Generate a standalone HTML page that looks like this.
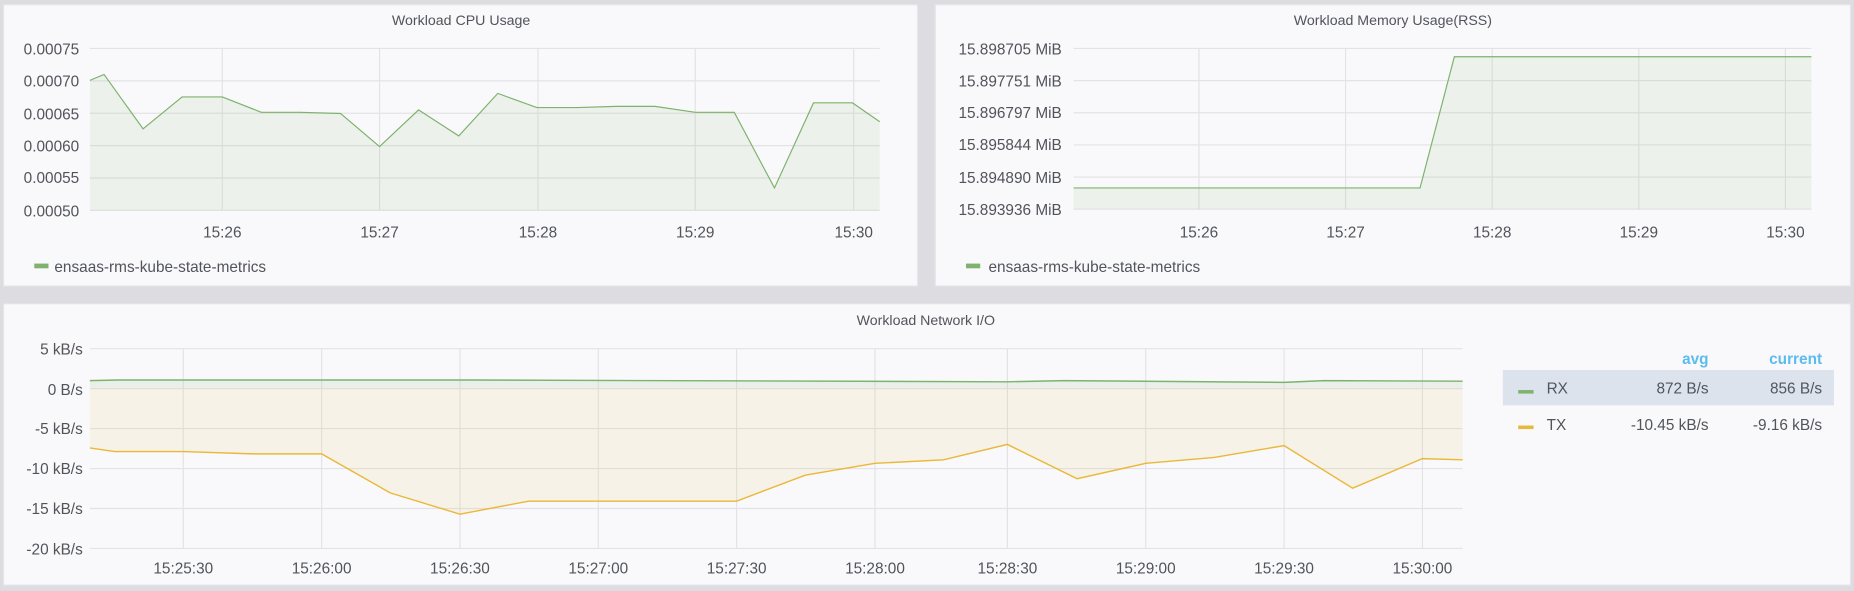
<!DOCTYPE html>
<html><head><meta charset="utf-8"><style>
html,body{margin:0;padding:0;background:#dcdce1;width:1854px;height:591px;overflow:hidden}
svg{display:block}
text{font-family:"Liberation Sans","DejaVu Sans",sans-serif;fill:#52545c}
</style></head><body>
<svg width="1854" height="591" viewBox="0 0 1568 500" preserveAspectRatio="none">
<rect x="0" y="0" width="1568" height="500" fill="#dcdce1"/>
<!-- panels -->
<rect x="3" y="4" width="773" height="238" fill="#f9f9fb" stroke="#e6e6ea"/>
<rect x="791" y="4" width="774" height="238" fill="#f9f9fb" stroke="#e6e6ea"/>
<rect x="3" y="257" width="1562" height="238" fill="#f9f9fb" stroke="#e6e6ea"/>

<!-- CPU -->
<text x="390" y="21" font-size="12" text-anchor="middle">Workload CPU Usage</text>
<g stroke="#e3e3e6" stroke-width="1">
<line x1="76" y1="41" x2="744" y2="41"/><line x1="76" y1="68.4" x2="744" y2="68.4"/><line x1="76" y1="95.8" x2="744" y2="95.8"/><line x1="76" y1="123.2" x2="744" y2="123.2"/><line x1="76" y1="150.6" x2="744" y2="150.6"/><line x1="76" y1="178" x2="744" y2="178"/>
<line x1="188" y1="41" x2="188" y2="178"/><line x1="321" y1="41" x2="321" y2="178"/><line x1="455" y1="41" x2="455" y2="178"/><line x1="588" y1="41" x2="588" y2="178"/><line x1="722" y1="41" x2="722" y2="178"/>
</g>
<g font-size="13" text-anchor="end">
<text x="67" y="46">0.00075</text><text x="67" y="73">0.00070</text><text x="67" y="101">0.00065</text><text x="67" y="128">0.00060</text><text x="67" y="155">0.00055</text><text x="67" y="183">0.00050</text>
</g>
<g font-size="13" text-anchor="middle">
<text x="188" y="201">15:26</text><text x="321" y="201">15:27</text><text x="455" y="201">15:28</text><text x="588" y="201">15:29</text><text x="722" y="201">15:30</text>
</g>
<path d="M76,68 L88,63 L121,109 L154,82 L188,82 L221,95 L254,95 L288,96 L321,124 L354,93 L388,115 L421,79 L454,91 L488,91 L521,90 L554,90 L588,95 L621,95 L655,159 L688,87 L721,87 L744,103 L744,178 L76,178Z" fill="#7eb26d" fill-opacity="0.1"/>
<path d="M76,68 L88,63 L121,109 L154,82 L188,82 L221,95 L254,95 L288,96 L321,124 L354,93 L388,115 L421,79 L454,91 L488,91 L521,90 L554,90 L588,95 L621,95 L655,159 L688,87 L721,87 L744,103" fill="none" stroke="#7eb26d" stroke-width="1"/>
<rect x="29" y="223" width="12" height="4" fill="#7eb26d"/>
<text x="46" y="230" font-size="13">ensaas-rms-kube-state-metrics</text>

<!-- Memory -->
<text x="1178" y="21" font-size="12" text-anchor="middle">Workload Memory Usage(RSS)</text>
<g stroke="#e3e3e6" stroke-width="1">
<line x1="908" y1="41" x2="1532" y2="41"/><line x1="908" y1="68.2" x2="1532" y2="68.2"/><line x1="908" y1="95.4" x2="1532" y2="95.4"/><line x1="908" y1="122.6" x2="1532" y2="122.6"/><line x1="908" y1="149.8" x2="1532" y2="149.8"/><line x1="908" y1="177" x2="1532" y2="177"/>
<line x1="1014" y1="41" x2="1014" y2="177"/><line x1="1138" y1="41" x2="1138" y2="177"/><line x1="1262" y1="41" x2="1262" y2="177"/><line x1="1386" y1="41" x2="1386" y2="177"/><line x1="1510" y1="41" x2="1510" y2="177"/>
</g>
<g font-size="13" text-anchor="end">
<text x="898" y="46">15.898705 MiB</text><text x="898" y="73">15.897751 MiB</text><text x="898" y="100">15.896797 MiB</text><text x="898" y="127">15.895844 MiB</text><text x="898" y="155">15.894890 MiB</text><text x="898" y="182">15.893936 MiB</text>
</g>
<g font-size="13" text-anchor="middle">
<text x="1014" y="201">15:26</text><text x="1138" y="201">15:27</text><text x="1262" y="201">15:28</text><text x="1386" y="201">15:29</text><text x="1510" y="201">15:30</text>
</g>
<path d="M908,159 L1201,159 L1230,48 L1532,48 L1532,177 L908,177Z" fill="#7eb26d" fill-opacity="0.1"/>
<path d="M908,159 L1201,159 L1230,48 L1532,48" fill="none" stroke="#7eb26d" stroke-width="1"/>
<rect x="817" y="223" width="12" height="4" fill="#7eb26d"/>
<text x="836" y="230" font-size="13">ensaas-rms-kube-state-metrics</text>

<!-- Network -->
<text x="783" y="275" font-size="12" text-anchor="middle">Workload Network I/O</text>
<g stroke="#e3e3e6" stroke-width="1">
<line x1="76" y1="295" x2="1237" y2="295"/><line x1="76" y1="328.8" x2="1237" y2="328.8"/><line x1="76" y1="362.6" x2="1237" y2="362.6"/><line x1="76" y1="396.4" x2="1237" y2="396.4"/><line x1="76" y1="430.2" x2="1237" y2="430.2"/><line x1="76" y1="464" x2="1237" y2="464"/>
<line x1="155" y1="295" x2="155" y2="464"/><line x1="272" y1="295" x2="272" y2="464"/><line x1="389" y1="295" x2="389" y2="464"/><line x1="506" y1="295" x2="506" y2="464"/><line x1="623" y1="295" x2="623" y2="464"/><line x1="740" y1="295" x2="740" y2="464"/><line x1="852" y1="295" x2="852" y2="464"/><line x1="969" y1="295" x2="969" y2="464"/><line x1="1086" y1="295" x2="1086" y2="464"/><line x1="1203" y1="295" x2="1203" y2="464"/>
</g>
<g font-size="13" text-anchor="end">
<text x="70" y="300">5 kB/s</text><text x="70" y="334">0 B/s</text><text x="70" y="367">-5 kB/s</text><text x="70" y="401">-10 kB/s</text><text x="70" y="435">-15 kB/s</text><text x="70" y="469">-20 kB/s</text>
</g>
<g font-size="13" text-anchor="middle">
<text x="155" y="485">15:25:30</text><text x="272" y="485">15:26:00</text><text x="389" y="485">15:26:30</text><text x="506" y="485">15:27:00</text><text x="623" y="485">15:27:30</text><text x="740" y="485">15:28:00</text><text x="852" y="485">15:28:30</text><text x="969" y="485">15:29:00</text><text x="1086" y="485">15:29:30</text><text x="1203" y="485">15:30:00</text>
</g>
<path d="M76,322 L100,321.5 L400,321.5 L852,323 L900,322 L1086,323.5 L1120,322 L1237,322.5 L1237,328 L76,328Z" fill="#7eb26d" fill-opacity="0.12"/>
<path d="M76,379 L97,382 L155,382 L214,384 L272,384 L330,417 L389,435 L447,424 L506,424 L564,424 L623,424 L681,402 L740,392 L798,389 L852,376 L911,405 L969,392 L1027,387 L1086,377 L1144,413 L1203,388 L1237,389 L1237,328 L76,328Z" fill="#eab839" fill-opacity="0.1"/>
<path d="M76,322 L100,321.5 L400,321.5 L852,323 L900,322 L1086,323.5 L1120,322 L1237,322.5" fill="none" stroke="#7eb26d" stroke-width="1.2"/>
<path d="M76,379 L97,382 L155,382 L214,384 L272,384 L330,417 L389,435 L447,424 L506,424 L564,424 L623,424 L681,402 L740,392 L798,389 L852,376 L911,405 L969,392 L1027,387 L1086,377 L1144,413 L1203,388 L1237,389" fill="none" stroke="#eab839" stroke-width="1.2"/>

<!-- legend table -->
<text x="1445" y="308" font-size="13" text-anchor="end" style="fill:#5bbcef;font-weight:bold">avg</text>
<text x="1541" y="308" font-size="13" text-anchor="end" style="fill:#5bbcef;font-weight:bold">current</text>
<rect x="1271" y="313" width="280" height="30" fill="#dde3ec"/>
<rect x="1284" y="330" width="13" height="3" fill="#7eb26d"/>
<text x="1308" y="333" font-size="13">RX</text>
<text x="1445" y="333" font-size="13" text-anchor="end">872 B/s</text>
<text x="1541" y="333" font-size="13" text-anchor="end">856 B/s</text>
<rect x="1284" y="360" width="13" height="3" fill="#eab839"/>
<text x="1308" y="364" font-size="13">TX</text>
<text x="1445" y="364" font-size="13" text-anchor="end">-10.45 kB/s</text>
<text x="1541" y="364" font-size="13" text-anchor="end">-9.16 kB/s</text>
</svg>
</body></html>
